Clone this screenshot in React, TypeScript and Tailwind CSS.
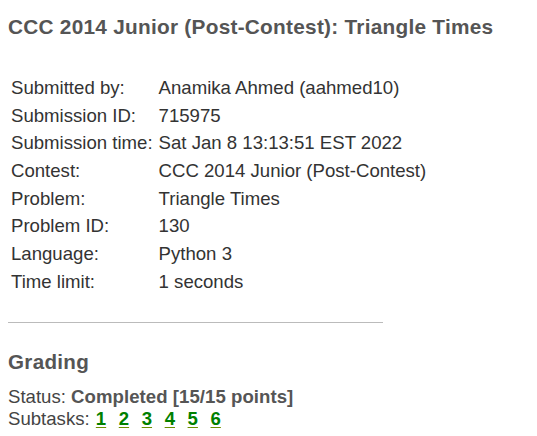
export default function App() {
  const rows: [string, string][] = [
    ['Submitted by:', 'Anamika Ahmed (aahmed10)'],
    ['Submission ID:', '715975'],
    ['Submission time:', 'Sat Jan 8 13:13:51 EST 2022'],
    ['Contest:', 'CCC 2014 Junior (Post-Contest)'],
    ['Problem:', 'Triangle Times'],
    ['Problem ID:', '130'],
    ['Language:', 'Python 3'],
    ['Time limit:', '1 seconds'],
  ];

  return (
    <div className="bg-white min-h-[436px] px-2 pt-[14px] text-[18.6px] text-[#333]" style={{ fontFamily: '"Liberation Sans", Arial, sans-serif' }}>
      <h2 className="text-[20.8px] font-bold text-[#555] leading-[26px] tracking-[0.26px]">
        CCC 2014 Junior (Post-Contest): Triangle Times
      </h2>

      <table className="mt-[34px] border-collapse">
        <tbody>
          {rows.map(([label, value]) => (
            <tr key={label} className="h-[27.7px]">
              <td className="pl-[3px] pr-[6px] py-0 leading-[20px] whitespace-nowrap">{label}</td>
              <td className="px-0 py-0 leading-[20px] whitespace-nowrap">{value}</td>
            </tr>
          ))}
        </tbody>
      </table>

      <hr className="mt-[26px] w-[375px] border-0 border-t border-[#bbb]" />

      <h3 className="mt-[26px] text-[20.6px] font-bold text-[#555] leading-[26px] tracking-[0.3px]">Grading</h3>

      <div className="mt-[11px] leading-[22px] text-[#444]">
        Status: <span className="font-bold text-[#555] tracking-[0.05px]">Completed [15/15 points]</span>
      </div>
      <div className="leading-[22px] text-[#444]">
        <span className="mr-[1px]">Subtasks:</span>{' '}
        {[1, 2, 3, 4, 5, 6].map((n) => (
          <span key={n} className="mr-[12.6px] font-bold text-[#008000] underline decoration-[#6b8e00] underline-offset-2">
            {n}
          </span>
        ))}
      </div>
    </div>
  );
}
